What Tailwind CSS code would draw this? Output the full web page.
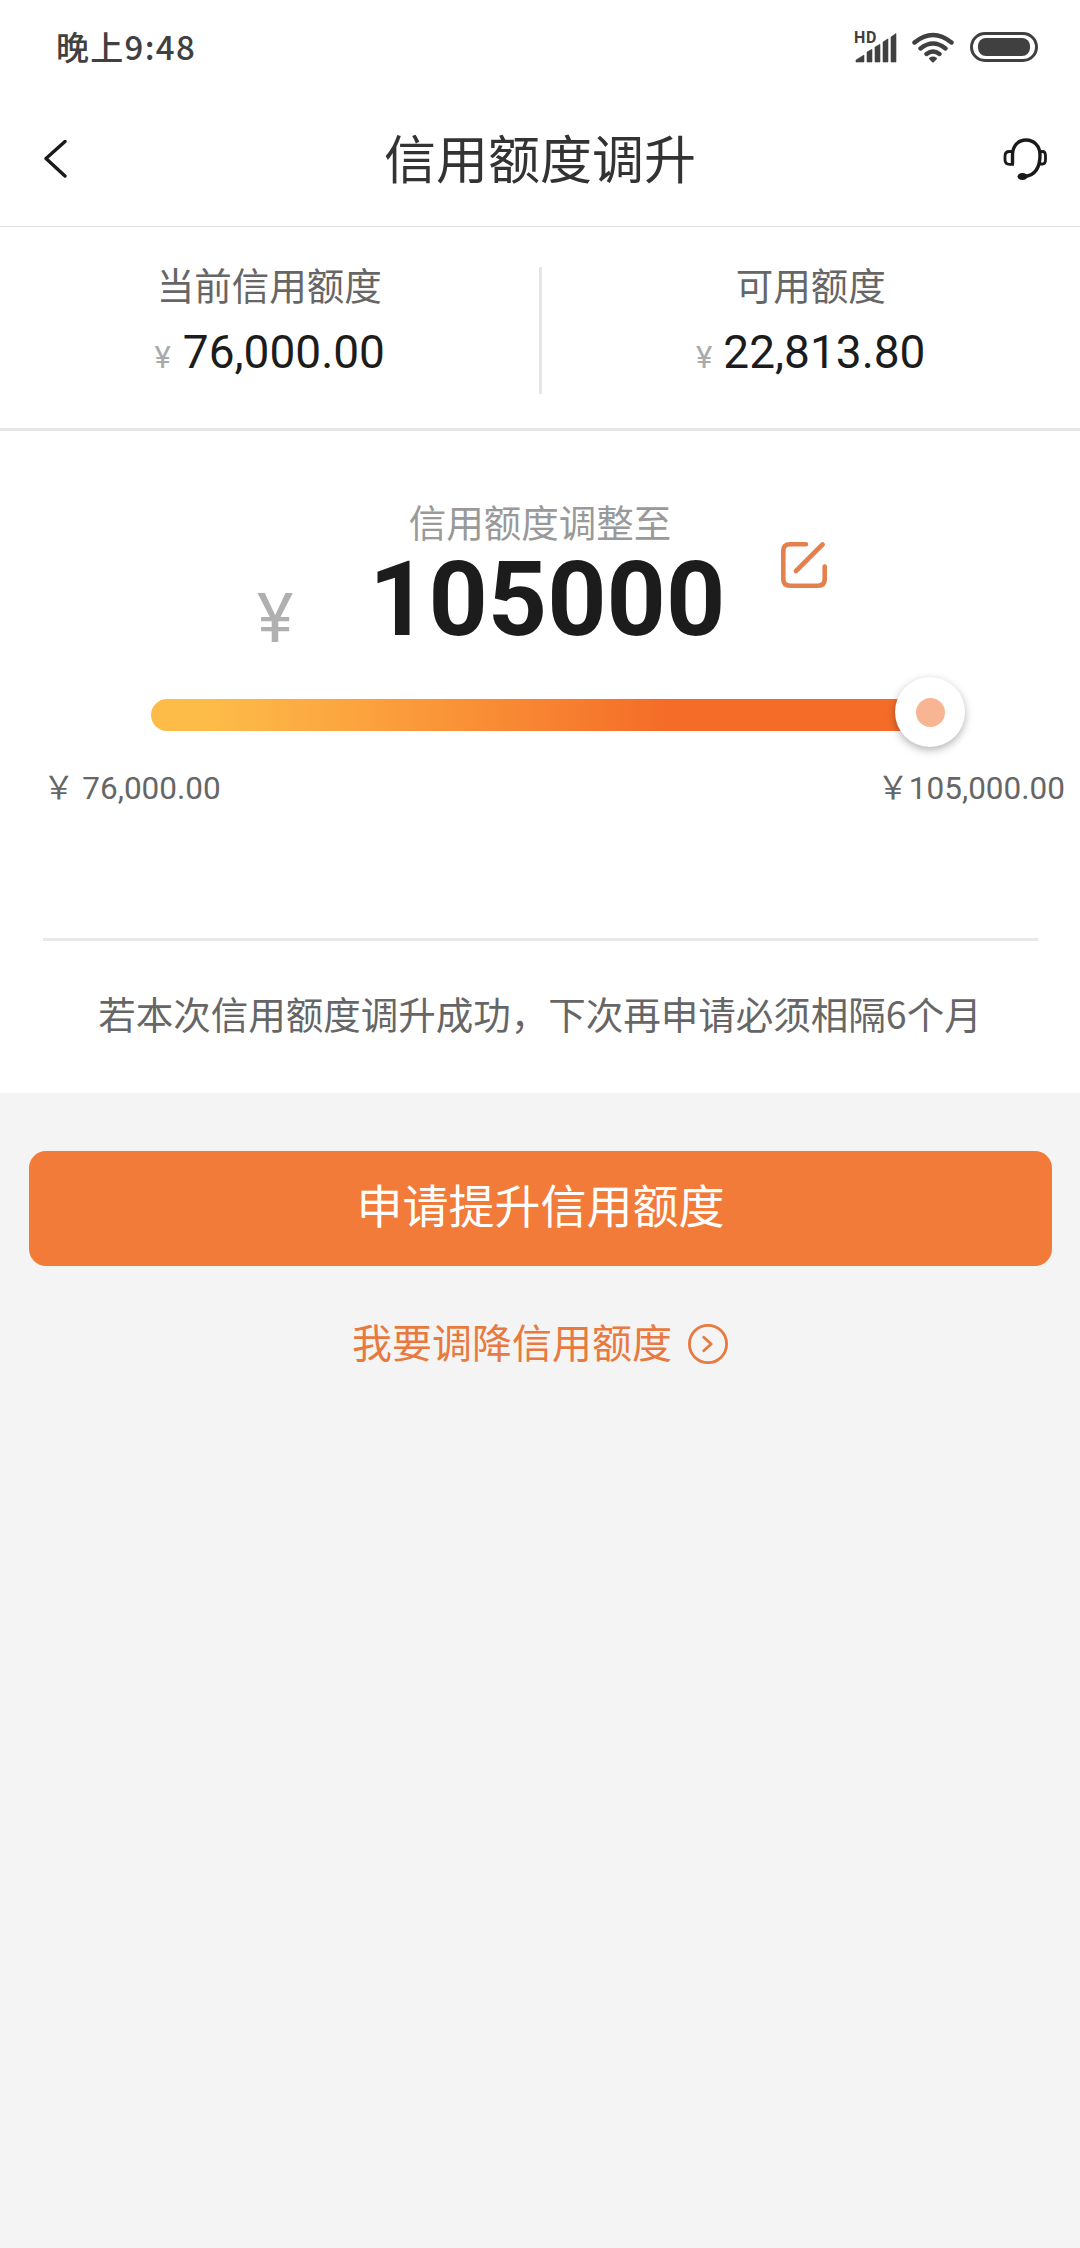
<!DOCTYPE html>
<html lang="zh-CN">
<head>
<meta charset="utf-8">
<title>信用额度调升</title>
<script src="https://cdn.jsdelivr.net/npm/@tailwindcss/browser@4"></script>
</head>
<body class="flex min-h-[2248px] w-[1080px] flex-col bg-[#f4f4f4] font-['Noto_Sans_CJK_SC',sans-serif]">

  <!-- Status bar -->
  <div class="flex h-[94px] items-center justify-between bg-white pr-[42px] pl-14 text-[#404040]">
    <div class="pb-[2px] text-[33px] leading-[92px] font-medium tracking-[1.300px]">晚上9:48</div>
    <div class="flex items-center">
      <div class="relative h-[31px] w-[42px]">
        <span class="absolute -top-[2px] -left-px font-[Roboto,sans-serif] text-[16px] leading-[16px] font-bold tracking-[0.6px]">HD</span>
        <svg class="block" width="42" height="31" viewBox="0 0 42 31" fill="currentColor">
          <path d="M1 30v-2l8-5v7zM12 30V20l5-2.700V30zM20 30V15l5-2.700V30zM28 30V10l5-3.200V30zM36 30V5l5-3.500V30z" stroke="currentColor" stroke-width=".6" stroke-linejoin="round"/>
        </svg>
      </div>
      <svg class="ml-[15px]" width="42" height="31" viewBox="0 0 42 31" fill="none" stroke="currentColor" stroke-width="4.400" stroke-linecap="round">
        <path d="M2.500 10.500Q21-4.500 39.500 10.500M8.500 16.500Q21 6.500 33.500 16.500M14.500 22Q21 17 27.500 22"/>
        <path d="M21 29.500l-3-3q3-2 6 0z" fill="currentColor" stroke-width="2" stroke-linejoin="round"/>
      </svg>
      <div class="ml-4 h-[30px] w-[68px] rounded-full border-[3px] border-[#404040] p-[3px]">
        <div class="mx-[2px] h-[18px] rounded-[8px] bg-[#404040]"></div>
      </div>
    </div>
  </div>

  <!-- Title bar -->
  <header class="flex h-[133px] items-center justify-between border-b border-[#e0e0e0] bg-white pr-[33px] pl-11">
    <svg width="46" height="40" viewBox="0 0 46 40" fill="none" stroke="#1a1a1a" stroke-width="3.400" stroke-linecap="round" stroke-linejoin="round"><path d="M21 1.500L2 18.500l19 17.500"/></svg>
    <h1 class="mr-[11px] pb-[7px] text-[52px] leading-[122px] text-[#333]">信用额度调升</h1>
    <svg class="mb-[3px]" width="46" height="44" viewBox="0 0 46 44" fill="none" stroke="#1a1a1a" stroke-width="3.400" stroke-linecap="round">
      <path d="M11.500 26.500V18C11.500 9 17 3 25 3S39 9 39 18c0 12-4 20-15 21.500" stroke-linecap="butt"/>
      <path d="M12 14.500H8.500Q4 14.500 4 19v4Q4 27.300 8.500 27.300H13" stroke-width="2.800" stroke-linecap="butt"/>
      <path d="M39.500 14.500h2Q44.500 14.500 44.500 19v3.500Q44.500 27 41.500 27h-2" stroke-width="2.800"/>
      <ellipse cx="21.500" cy="39.500" rx="5" ry="3.500" fill="#1a1a1a" stroke="none"/>
    </svg>
  </header>

  <!-- Current and available limits -->
  <section class="flex h-[204px] border-b-[3px] border-[#e6e6e6] bg-white pt-[40px]">
    <div class="flex flex-1 flex-col items-center">
      <div class="text-[37.500px] leading-[34px] text-[#666]">当前信用额度</div>
      <div class="mt-[23px] flex items-baseline gap-[12px] pl-px font-[Roboto,sans-serif] leading-[56px]">
        <span class="text-[31px] text-[#aaa]">¥</span><span class="text-[46px] text-[#1c1c1c]">76,000.00</span>
      </div>
    </div>
    <div class="h-[127px] w-[3px] bg-[#e6e6e6]"></div>
    <div class="flex flex-1 flex-col items-center">
      <div class="text-[37.500px] leading-[34px] text-[#666]">可用额度</div>
      <div class="mt-[23px] flex items-baseline gap-[11px] font-[Roboto,sans-serif] leading-[56px]">
        <span class="text-[31px] text-[#aaa]">¥</span><span class="text-[46px] text-[#1c1c1c]">22,813.80</span>
      </div>
    </div>
  </section>

  <!-- Limit adjustment -->
  <section class="flex h-[662px] flex-col bg-white pt-[70px]">
    <div class="text-center text-[37.500px] leading-[40px] text-[#999]">信用额度调整至</div>
    <div class="flex h-[158px] items-start pl-[257px] font-[Roboto,sans-serif]">
      <span class="w-[112px] pt-[38px] text-[69px] leading-[80px] text-[#b0b0b0]">¥</span>
      <span class="w-[412px] pt-[13px] text-[103.500px] leading-[92px] font-bold text-[#1c1c1c]">105000</span>
      <svg class="mt-px" width="46" height="46" viewBox="0 0 46 46" fill="none" stroke="#e5804d" stroke-width="4.600" stroke-linecap="round">
        <path d="M25 2.300H9Q2.300 2.300 2.300 9v28Q2.300 43.700 9 43.700h28Q43.700 43.700 43.700 37V24.500M41.500 2.500L15 29"/>
      </svg>
    </div>
    <div class="relative ml-[151px] h-8 w-[780px] rounded-full bg-linear-to-r from-[#fdbb48] from-8% to-[#f46c28] to-66%">
      <div class="absolute -top-[22px] -right-[34px] flex size-[70px] items-center justify-center rounded-full bg-white shadow-[0_3px_8px_rgba(0,0,0,0.3)]">
        <div class="size-[29px] rounded-full bg-[#f8b593]"></div>
      </div>
    </div>
    <div class="mt-[36px] flex h-[171px] justify-between pr-[15px] pl-[43px] font-[Roboto,'Noto_Sans_CJK_SC',sans-serif] text-[31.500px] leading-[44px] text-[#666]">
      <span>￥ 76,000.00</span>
      <span>￥105,000.00</span>
    </div>
    <div class="mr-[42px] ml-[43px] h-[3px] bg-[#e9e9e9]"></div>
    <p class="pt-[48px] text-center text-[37.500px] leading-[48px] text-[#666]">若本次信用额度调升成功，下次再申请必须相隔6个月</p>
  </section>

  <!-- Actions -->
  <button class="mt-[58px] mr-[28px] ml-[29px] h-[115px] rounded-[17px] bg-[#f37b39] pb-[10px] text-[46px] leading-[105px] text-white">申请提升信用额度</button>
  <a class="mt-[56px] flex items-center justify-center gap-4 text-[40px] leading-[48px] text-[#e8793f]">
    <span class="-mt-[5px]">我要调降信用额度</span>
    <svg width="40" height="40" viewBox="0 0 40 40" fill="none" stroke="currentColor" stroke-width="2.800"><circle cx="20" cy="20" r="18.600"/><path d="M15.700 13.200l7.500 6.800-7.500 6.800" stroke-linecap="round" stroke-linejoin="round"/></svg>
  </a>
</body>
</html>
